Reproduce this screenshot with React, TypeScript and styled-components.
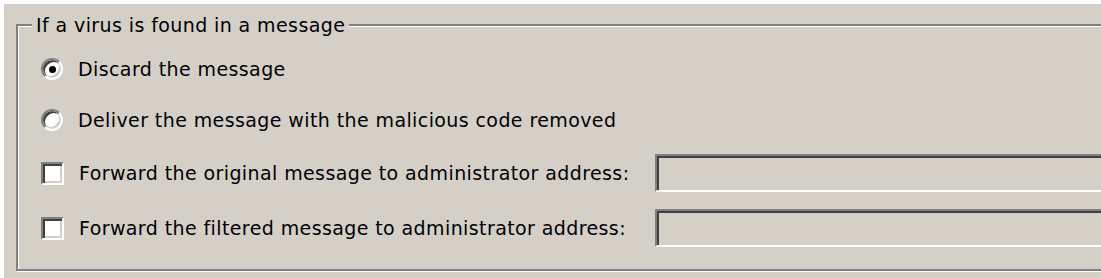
import React from "react";
import styled, { createGlobalStyle } from "styled-components";

const GlobalStyle = createGlobalStyle`
  html, body {
    margin: 0;
    padding: 0;
    background: #ffffff;
    overflow: hidden;
  }
  #root {
    width: 1101px;
    height: 278px;
    overflow: hidden;
  }
`;

const Panel = styled.div`
  margin: 4px 0 0 4px;
  height: 274px;
  box-sizing: border-box;
  background: #d4d0c8;
  padding: 10px 0 0 12px;
  font-family: "DejaVu Sans", "Liberation Sans", sans-serif;
  font-size: 19px;
  letter-spacing: 0.4px;
  color: #000;
  overflow: hidden;
`;

const Group = styled.fieldset`
  margin: 0;
  padding: 0 0 22px 0;
  width: 1200px;
  box-sizing: border-box;
  border: 2px solid #808080;
  box-shadow: inset 1px 1px 0 #ffffff, 1px 1px 0 #ffffff;
  min-inline-size: 0;
`;

const Legend = styled.legend`
  margin-left: 14px;
  padding: 0 4px;
  line-height: 22px;
  background: #d4d0c8;
`;

const Options = styled.div`
  display: flex;
  flex-direction: column;
  gap: 17px;
  padding: 16px 0 0 23px;
`;

const Row = styled.div<{ $tall?: boolean }>`
  display: flex;
  align-items: center;
  height: ${(p) => (p.$tall ? 38 : 34)}px;
`;

const Choice = styled.label<{ $width?: number }>`
  display: flex;
  align-items: center;
  gap: 15px;
  white-space: nowrap;
  ${(p) => (p.$width ? `width: ${p.$width}px; flex: none;` : "")}
`;

const Radio = styled.span<{ $checked?: boolean }>`
  position: relative;
  width: 22px;
  height: 22px;
  box-sizing: border-box;
  flex: none;
  border-radius: 50%;
  border: 2px solid;
  border-color: #808080 #ffffff #ffffff #808080;
  background: #ffffff;
  box-shadow: inset 2px 2px 0 #404040, inset -2px -2px 0 #d4d0c8;
  &::after {
    content: "";
    display: ${(p) => (p.$checked ? "block" : "none")};
    position: absolute;
    left: 50%;
    top: 50%;
    width: 7px;
    height: 7px;
    margin: -3.5px 0 0 -3.5px;
    border-radius: 50%;
    background: #000;
  }
`;

const Check = styled.span`
  width: 23px;
  height: 23px;
  box-sizing: border-box;
  flex: none;
  border: 2px solid;
  border-color: #808080 #ffffff #ffffff #808080;
  background: #ffffff;
  box-shadow: inset 2px 2px 0 #404040, inset -2px -2px 0 #d4d0c8;
`;

const Field = styled.div`
  width: 600px;
  height: 38px;
  box-sizing: border-box;
  flex: none;
  border: 2px solid;
  border-color: #808080 #ffffff #ffffff #808080;
  background: #d4d0c8;
  box-shadow: inset 2px 2px 0 #404040;
`;

export default function App() {
  return (
    <>
      <GlobalStyle />
      <Panel>
        <Group>
          <Legend>If a virus is found in a message</Legend>
          <Options>
            <Row>
              <Choice>
                <Radio $checked />
                Discard the message
              </Choice>
            </Row>
            <Row>
              <Choice>
                <Radio />
                Deliver the message with the malicious code removed
              </Choice>
            </Row>
            <Row $tall>
              <Choice $width={614}>
                <Check />
                Forward the original message to administrator address:
              </Choice>
              <Field />
            </Row>
            <Row $tall>
              <Choice $width={614}>
                <Check />
                Forward the filtered message to administrator address:
              </Choice>
              <Field />
            </Row>
          </Options>
        </Group>
      </Panel>
    </>
  );
}
